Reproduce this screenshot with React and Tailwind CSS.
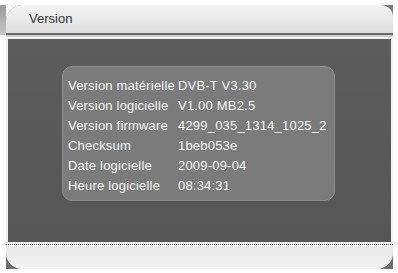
import React from "react";

const rows = [
  ["Version matérielle", "DVB-T V3.30"],
  ["Version logicielle", "V1.00 MB2.5"],
  ["Version firmware", "4299_035_1314_1025_2"],
  ["Checksum", "1beb053e"],
  ["Date logicielle", "2009-09-04"],
  ["Heure logicielle", "08:34:31"],
];

const App = () => {
  return (
    <div className="w-[398px] h-[273px] bg-white overflow-hidden font-['Liberation_Sans',Arial,sans-serif]">
      <div className="flex h-full pt-[5px]">
        {/* left edge shadow */}
        <div className="w-[6px] h-[30px] bg-gradient-to-b from-[#9a9a9a] to-[#c8c8c8]" />
        <div className="w-[387px] flex flex-col">
          {/* Header */}
          <div className="h-[28px] bg-[#7a7a7a] rounded-tl-[16px]">
            <div className="h-full rounded-tl-[16px] rounded-tr-[12px] bg-gradient-to-b from-[#f4f4f4] to-[#dedede] flex items-center pl-[23px]">
              <span className="text-[13px] text-[#333]">Version</span>
            </div>
          </div>
          <div className="h-[2px] bg-[#6a6a6a]" />
          <div className="h-[2px] bg-[#cfcfcf]" />

          {/* Content */}
          <div className="h-[207px] border-2 border-[#f2f2f2] bg-gradient-to-b from-[#5c5c5c] to-[#565656] pl-[54px] pt-[27px]">
            <div className="w-[273px] h-[135px] rounded-[10px] border border-[#8e8e8e] bg-[#7b7b7b] pt-[9px] pl-[5px] overflow-hidden">
              {rows.map(([label, value]) => (
                <div key={label} className="flex h-[20px] items-center text-[13px] text-[#f6f6f6] whitespace-nowrap tracking-[0.2px]">
                  <span className="w-[110px] shrink-0">{label}</span>
                  <span>{value}</span>
                </div>
              ))}
            </div>
          </div>

          {/* Footer */}
          <div className="h-[2px] border-t border-dotted border-[#444]" />
          <div className="h-[23px] bg-[#6e6e6e]">
            <div className="h-full rounded-bl-[16px] rounded-br-[16px] bg-gradient-to-b from-[#e8e8e8] to-[#f2f2f2]" />
          </div>
        </div>
      </div>
    </div>
  );
};

export default App;
